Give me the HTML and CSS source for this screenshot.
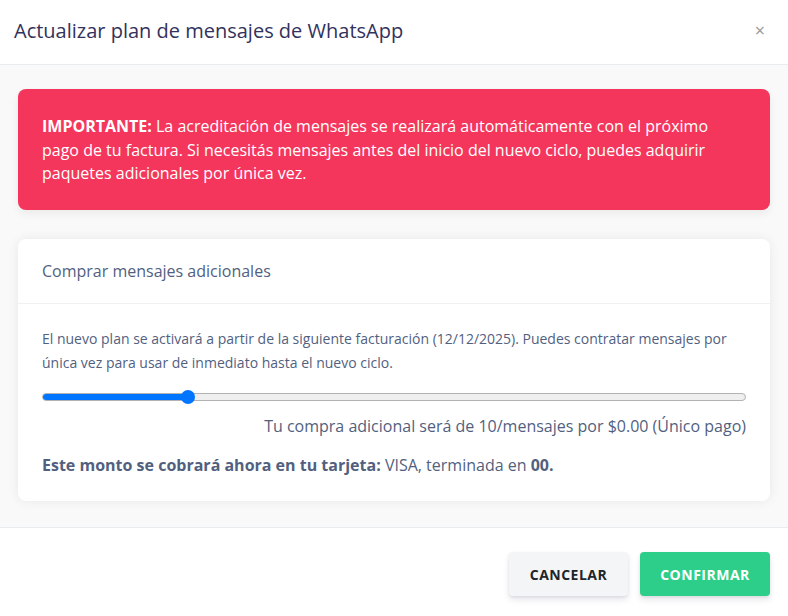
FILE: index.html
```html
<!DOCTYPE html>
<html lang="es">
<head>
<meta charset="utf-8">
<link rel="stylesheet" href="styles.css">
</head>
<body>
<div class="modal">
  <div class="modal-header">
    <h5 class="modal-title">Actualizar plan de mensajes de WhatsApp</h5>
    <span class="close">×</span>
  </div>
  <div class="modal-body">
    <div class="alert">
      <strong>IMPORTANTE:</strong> La acreditación de mensajes se realizará automáticamente con el próximo pago de tu factura. Si necesitás mensajes antes del inicio del nuevo ciclo, puedes adquirir paquetes adicionales por única vez.
    </div>
    <div class="card">
      <div class="card-header">Comprar mensajes adicionales</div>
      <div class="card-body">
        <p class="desc">El nuevo plan se activará a partir de la siguiente facturación (12/12/2025). Puedes contratar mensajes por única vez para usar de inmediato hasta el nuevo ciclo.</p>
        <div class="slider">
          <div class="track"><div class="fill" style="width:20.7%"></div></div>
          <div class="thumb" style="left:20.7%"></div>
        </div>
        <p class="summary">Tu compra adicional será de 10/mensajes por $0.00 (Único pago)</p>
        <p class="charge"><strong>Este monto se cobrará ahora en tu tarjeta:</strong> VISA, terminada en <strong>00.</strong></p>
      </div>
    </div>
  </div>
  <div class="modal-footer">
    <button class="btn btn-secondary">Cancelar</button>
    <button class="btn btn-success">Confirmar</button>
  </div>
</div>
</body>
</html>
```
FILE: styles.css
```css
* { box-sizing: border-box; }
html, body { margin: 0; padding: 0; }
body {
  font-family: "Open Sans", "Liberation Sans", sans-serif;
  background: #ffffff;
  color: #525f7f;
  width: 788px;
  height: 616px;
  overflow: hidden;
}
.modal { display: flex; flex-direction: column; height: 616px; }
.modal-header {
  height: 65px;
  display: flex;
  align-items: center;
  justify-content: space-between;
  padding: 0 23px 0 14px;
  border-bottom: 1px solid #e9ecef;
  background: #fff;
}
.modal-title {
  margin: 0;
  font-size: 20px;
  font-weight: 400;
  color: #32325d;
  padding-bottom: 4px;
}
.close { color: #9a9a9a; font-size: 18px; line-height: 1; padding-bottom: 4px; }
.modal-body {
  background: #f9f9fa;
  padding: 24px 18px 24px 18px;
  display: flex;
  flex-direction: column;
  gap: 29px;
  height: 463px;
  border-bottom: 1px solid #e9ecef;
}
.alert {
  background: #f5365c;
  color: #fff;
  border-radius: 8px;
  padding: 26px 24px 24px;
  font-size: 16px;
  line-height: 23.5px;
  box-shadow: 0 4px 8px rgba(0,0,0,0.06);
}
.alert strong { font-weight: 700; }
.card {
  background: #fff;
  border-radius: 8px;
  box-shadow: 0 0 12px rgba(0,0,0,0.07);
}
.card-header {
  height: 65px;
  padding: 0 24px;
  display: flex;
  align-items: center;
  font-size: 16px;
  color: #525f7f;
  border-bottom: 1px solid #eef0f2;
}
.card-body { padding: 23px 24px 24px; }
.desc { margin: 0; font-size: 14px; line-height: 24px; color: #525f7f; }
.slider { position: relative; margin: 15px 0 0; height: 14px; display: flex; align-items: center; }
.track {
  width: 100%;
  height: 8px;
  border-radius: 4px;
  background: #efefef;
  border: 1px solid #b2b2b2;
  overflow: hidden;
}
.fill { height: 100%; background: #0075ff; }
.thumb {
  position: absolute;
  top: 0;
  width: 14px;
  height: 14px;
  margin-left: -7px;
  border-radius: 50%;
  background: #0075ff;
}
.summary { margin: 10px 0 0; text-align: right; font-size: 16px; line-height: 24px; }
.charge { margin: 15px 0 0; font-size: 16px; line-height: 24px; }
.charge strong { font-weight: 700; }
.modal-footer {
  flex: 1;
  display: flex;
  justify-content: flex-end;
  align-items: flex-start;
  gap: 12px;
  padding: 24px 18px 0;
  background: #fff;
}
.btn {
  font-family: inherit;
  font-size: 14px;
  font-weight: 700;
  text-transform: uppercase;
  letter-spacing: 0.5px;
  height: 44px;
  border: none;
  border-radius: 4px;
  padding: 0 20px;
  box-shadow: 0 4px 6px rgba(50,50,93,.11), 0 1px 3px rgba(0,0,0,.08);
}
.btn-secondary { background: #f4f5f7; color: #212529; width: 119px; }
.btn-success { background: #2dce89; color: #fff; width: 130px; }
```
